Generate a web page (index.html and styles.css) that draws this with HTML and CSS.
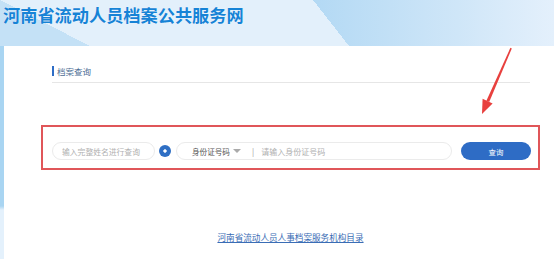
FILE: index.html
```html
<!DOCTYPE html>
<html lang="zh-CN">
<head>
    <meta charset="UTF-8">
    <title>河南省流动人员档案公共服务网</title>
    <link rel="stylesheet" href="styles.css">
</head>
<body>
<div class="header">
    <h1 class="site-title">河南省流动人员档案公共服务网</h1>
</div>
<div class="main">
    <div class="side-strip"></div>
    <div class="card">
        <div class="section-title"><span class="bar"></span>档案查询</div>
        <form class="search-box">
            <input class="name-input" type="text" placeholder="输入完整姓名进行查询">
            <span class="dot"></span>
            <div class="id-field">
                <span class="id-type">身份证号码</span>
                <span class="caret"></span>
                <span class="sep">|</span>
                <input class="id-input" type="text" placeholder="请输入身份证号码">
            </div>
            <button class="search-btn" type="button">查询</button>
        </form>
        <div class="footer">
            <a href="#" class="org-link">河南省流动人员人事档案服务机构目录</a>
        </div>
    </div>
</div>
<svg class="arrow" width="40" height="70" viewBox="0 0 40 70">
    <path d="M34.4 0.8 L35.8 1.4 L13.2 55 L10.4 53.8 Z" fill="#e8403e"/>
    <path d="M6.6 51.8 L16.6 56.4 L6 67 Z" fill="#e8403e"/>
</svg>
</body>
</html>
```

FILE: styles.css
```css
body {
  margin: 0;
  width: 554px;
  height: 259px;
  overflow: hidden;
  font-family: "Noto Sans CJK SC", "Noto Sans", sans-serif;
  background-color: #e4f1fc;
  position: relative;
}

.header {
  height: 46px;
  background-color: #e3f0fb;
  background-image:
    linear-gradient(to top right, #e3f0fb 50%, transparent 50%),
    linear-gradient(to right, #b3d9f4, #cfe6f8 60%, #e4f0fc),
    linear-gradient(to top right, #c4e1f6 50%, transparent 50%);
  background-repeat: no-repeat;
  background-size: 36px 46px, 241px 46px, 90px 46px;
  background-position: 313px 0, 313px 0, 0 0;
}

.site-title {
  margin: 0;
  padding: 5px 0 0 3px;
  font-size: 17.2px;
  line-height: 20px;
  font-weight: bold;
  color: #1683d6;
  letter-spacing: 0;
  text-shadow: 0 0 1px #fff;
}

.main {
  display: flex;
  height: 213px;
}

.side-strip {
  width: 4px;
  background: linear-gradient(to bottom, #a9d5f2 0, #a9d5f2 160px, #e4f1fc 164px);
}

.card {
  flex: 1;
  background: #fff;
  padding: 17px 14px 0 37px;
  display: flex;
  flex-direction: column;
}

.section-title {
  margin: 0 10px 0 11px;
  display: flex;
  align-items: center;
  height: 15px;
  padding-bottom: 4px;
  border-bottom: 1px solid #e6e6e6;
  font-size: 8.5px;
  color: #4c6d94;
}

.bar {
  width: 2px;
  height: 10px;
  background: #2e6dc6;
  margin-right: 3px;
}

.search-box {
  margin: 42px 0 0 0;
  border: 2px solid #e05659;
  padding: 15px 7px 8px 9px;
  display: flex;
  align-items: center;
}

.name-input {
  width: 103px;
  height: 18px;
  box-sizing: border-box;
  border: 1px solid #ebebeb;
  border-radius: 9px;
  padding: 0 0 0 9px;
  font-family: inherit;
  font-size: 7.8px;
  outline: none;
}

.name-input::placeholder,
.id-input::placeholder {
  color: #b0b0b0;
}

.dot {
  width: 12px;
  height: 12px;
  margin-left: 4px;
  border-radius: 50%;
  background: radial-gradient(circle, #fff 0, #fff 1.4px, #2f6fc4 1.9px);
}

.id-field {
  margin-left: 5px;
  width: 276px;
  height: 18px;
  box-sizing: border-box;
  border: 1px solid #ebebeb;
  border-radius: 9px;
  display: flex;
  align-items: center;
  padding-left: 15px;
}

.id-type {
  font-size: 7.6px;
  color: #555;
}

.caret {
  margin-left: 3px;
  width: 0;
  height: 0;
  border-left: 4px solid transparent;
  border-right: 4px solid transparent;
  border-top: 4px solid #aaa;
}

.sep {
  margin-left: 11px;
  font-size: 8px;
  color: #999;
}

.id-input {
  margin-left: 5px;
  border: none;
  flex: 1;
  font-family: inherit;
  font-size: 8px;
  outline: none;
  background: transparent;
}

.search-btn {
  margin-left: 9px;
  width: 70px;
  height: 18px;
  border: none;
  border-radius: 9px;
  background: #2e6cc5;
  color: #fff;
  font-family: inherit;
  font-size: 7.4px;
  padding: 0;
}

.footer {
  margin-top: 61px;
  text-align: center;
  font-size: 8.6px;
}

.org-link {
  color: #3a6db5;
  text-decoration: underline;
}

.arrow {
  position: absolute;
  left: 476px;
  top: 47px;
}
```
